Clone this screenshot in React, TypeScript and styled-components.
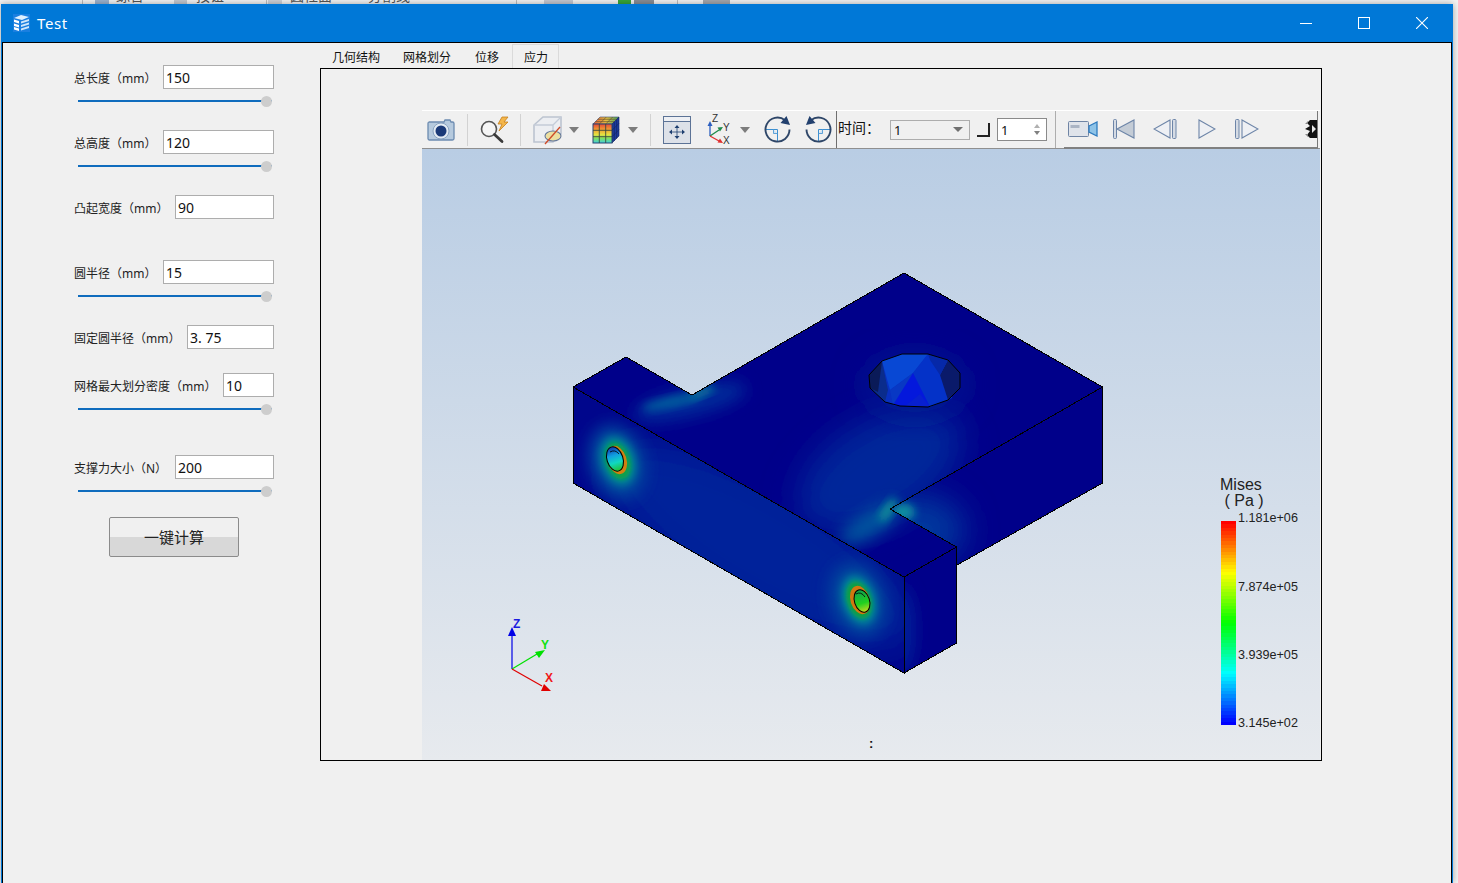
import React from 'react';
import styled, { createGlobalStyle } from 'styled-components';

const Global = createGlobalStyle`
  html, body { margin: 0; padding: 0; height: 100%; overflow: hidden; background: #f4f4f4; }
  #root { height: 100%; }
  * { box-sizing: border-box; }
`;

const CJK = `"Noto Sans", "Noto Sans CJK SC", sans-serif`;

const Page = styled.div`
  height: 883px;
  width: 1458px;
  display: flex;
  flex-direction: column;
  overflow: hidden;
  font-family: ${CJK};
`;
const BackStrip = styled.div`
  height: 4px;
  overflow: hidden;
  display: flex;
  background: #f3f3f3;
  color: #555;
  font-size: 14px;
  line-height: 20px;
`;
const BackLabel = styled.span<{ $ml: number }>`
  flex: none;
  margin: -14px 0 0 ${p => p.$ml}px;
  height: 20px;
`;
const BackLine = styled.span<{ $ml: number }>`
  flex: none;
  width: 1px;
  margin-left: ${p => p.$ml}px;
  background: #bdbdbd;
`;
const BackShape = styled.span<{ $ml: number; $w: number; $c: string }>`
  flex: none;
  width: ${p => p.$w}px;
  margin-left: ${p => p.$ml}px;
  background: ${p => p.$c};
`;
const Win = styled.div`
  flex: 1;
  width: 1452px;
  margin-left: 1px;
  padding: 0 1px;
  display: flex;
  flex-direction: column;
  background: #0078d7;
  box-shadow: 0 0 7px rgba(0, 0, 0, 0.35);
`;
const TitleBar = styled.div`
  height: 38px;
  display: flex;
  align-items: center;
  padding-left: 11px;
  color: #fff;
`;
const TitleText = styled.span`
  margin-left: 7px;
  font-size: 15px;
  letter-spacing: 0.6px;
`;
const WinButtons = styled.div`
  margin-left: auto;
  display: flex;
  align-items: center;
  padding-right: 24px;
  gap: 46px;
`;
const Client = styled.div`
  flex: 1;
  display: flex;
  background: #f0f0f0;
  border: 1px solid #000;
  border-bottom: none;
`;
const Panel = styled.div`
  width: 317px;
  padding: 22px 46px 0 71px;
  display: flex;
  flex-direction: column;
`;
const Group = styled.div<{ $h: number }>`
  height: ${p => p.$h}px;
`;
const Row = styled.div`
  display: flex;
  justify-content: space-between;
  align-items: center;
  height: 24px;
`;
const Label = styled.label`
  font-size: 12px;
  color: #222;
  white-space: nowrap;
  padding-top: 2px;
`;
const Field = styled.input<{ $w: number }>`
  width: ${p => p.$w}px;
  height: 24px;
  border: 1px solid #adadad;
  background: #fff;
  padding: 0 2px;
  font-family: ${CJK};
  font-size: 14px;
  color: #111;
  outline: none;
`;
const Slider = styled.div`
  position: relative;
  margin: 7px 0 0 4px;
  width: 194px;
  height: 10px;
  display: flex;
  align-items: center;
`;
const Track = styled.div`
  width: 100%;
  height: 2px;
  background: #0f6cbd;
`;
const Thumb = styled.div`
  position: absolute;
  right: 0;
  top: 0;
  width: 11px;
  height: 11px;
  border-radius: 50%;
  background: #cdcdcd;
`;
const CalcButton = styled.button`
  width: 130px;
  height: 40px;
  margin-left: 35px;
  border: 1px solid #8b8b8b;
  border-radius: 2px;
  background: linear-gradient(#f0f0f0 0, #f0f0f0 50%, #d8d8d8 50%, #d8d8d8 100%);
  font-family: ${CJK};
  font-size: 15px;
  color: #222;
  padding: 0 0 2px;
`;
const Main = styled.div`
  display: flex;
  flex-direction: column;
  padding-top: 1px;
`;
const Tabs = styled.div`
  display: flex;
  height: 24px;
`;
const Tab = styled.div<{ $active?: boolean; $pl: number; $pr: number }>`
  font-size: 12px;
  line-height: ${p => (p.$active ? 25 : 27)}px;
  height: 24px;
  color: #111;
  padding: 0 ${p => p.$pr}px 0 ${p => p.$pl}px;
  ${p => p.$active && `border: 1px solid #dadada; border-bottom: none;`}
`;
const Frame = styled.div`
  width: 1002px;
  height: 693px;
  border: 1px solid #000;
  padding: 41px 1px 0 101px;
  display: flex;
  flex-direction: column;
`;
const ToolBar = styled.div`
  height: 39px;
  flex: none;
  display: flex;
  align-items: center;
  background: #f0f0f0;
  border-top: 1px solid #fff;
  border-bottom: 1px solid #8f8f8f;
  padding-left: 5px;
`;
const Tool = styled.span<{ $w: number; $ml?: number }>`
  flex: none;
  display: flex;
  align-items: center;
  justify-content: center;
  width: ${p => p.$w}px;
  margin-left: ${p => p.$ml ?? 0}px;
`;
const Sep = styled.span<{ $ml: number }>`
  flex: none;
  width: 1px;
  height: 32px;
  margin-left: ${p => p.$ml}px;
  background: #d2d2d2;
`;
const HardSep = styled.span`
  flex: none;
  align-self: stretch;
  width: 1px;
  margin-left: 4px;
  background: #6f6f6f;
`;
const TimeLabel = styled.span`
  margin-left: 1px;
  width: 52px;
  font-size: 14px;
  line-height: 18px;
  padding-bottom: 3px;
  color: #111;
  flex: none;
`;
const Combo = styled.div`
  flex: none;
  width: 80px;
  height: 20px;
  border: 1px solid #adadad;
  display: flex;
  align-items: center;
  justify-content: space-between;
  padding: 0 6px 0 3px;
  font-size: 13px;
  color: #111;
`;
const ComboArrow = styled.span`
  width: 0;
  height: 0;
  border-left: 5px solid transparent;
  border-right: 5px solid transparent;
  border-top: 5px solid #707070;
`;
const CornerBox = styled.span`
  flex: none;
  width: 13px;
  height: 14px;
  margin-left: 7px;
  border-right: 2px solid #222;
  border-bottom: 2px solid #222;
`;
const Spin = styled.div`
  flex: none;
  width: 50px;
  height: 23px;
  margin-left: 7px;
  border: 1px solid #8a8a8a;
  background: #fff;
  display: flex;
  align-items: center;
  justify-content: space-between;
  padding: 0 6px 0 3px;
  font-size: 13px;
  color: #111;
`;
const SpinArrows = styled.span`
  display: flex;
  flex-direction: column;
  gap: 3px;
`;
const SpinUp = styled.span`
  width: 0;
  height: 0;
  border-left: 3px solid transparent;
  border-right: 3px solid transparent;
  border-bottom: 4px solid #b0b0b0;
`;
const SpinDown = styled(SpinUp)`
  border-bottom: none;
  border-top: 4px solid #808080;
`;
const LightSep = styled.span`
  flex: none;
  align-self: stretch;
  width: 1px;
  margin-left: 8px;
  background: #adadad;
`;
const Player = styled.div`
  flex: none;
  align-self: stretch;
  width: 254px;
  margin-left: 8px;
  margin-bottom: -1px;
  display: flex;
  align-items: center;
  padding-left: 4px;
  border-bottom: 2px solid #808080;
  border-right: 1px solid #777;
`;
const Canvas = styled.div`
  position: relative;
  flex: 1;
  background: linear-gradient(#b9cde4 0%, #e7eaee 100%);
  overflow: hidden;
`;
const Scene = styled.svg`
  position: absolute;
  inset: 0;
  width: 100%;
  height: 100%;
`;
const Legend = styled.div`
  position: absolute;
  left: 798px;
  top: 328px;
  width: 90px;
  height: 255px;
  font-family: "Liberation Sans", sans-serif;
  color: #222;
`;
const LegendTitle = styled.div`
  font-size: 16px;
  line-height: 16px;
  white-space: pre;
`;
const steps = 60;
const ramp = (t: number) => {
  const c = (v: number) => Math.round(Math.max(0, Math.min(1, v)) * 255);
  const s = t * 4;
  const r = c(s < 1 ? 1 : 2 - s);
  const g = c(s < 1 ? s : s < 3 ? 1 : 4 - s);
  const b = c(s < 2 ? 0 : s < 3 ? s - 2 : 1);
  return `rgb(${r},${g},${b})`;
};
const bandStops = Array.from({ length: steps }, (_, i) => {
  const a = (i / steps) * 100;
  const z = ((i + 1) / steps) * 100;
  return `${ramp(i / (steps - 1))} ${a}% ${z}%`;
}).join(',');
const ColorBar = styled.div`
  position: absolute;
  left: 1px;
  top: 44px;
  width: 15px;
  height: 204px;
  background: linear-gradient(${bandStops});
`;
const Tick = styled.div<{ $top: number }>`
  position: absolute;
  left: 18px;
  top: ${p => p.$top}px;
  font-size: 12.6px;
  line-height: 14px;
  white-space: nowrap;
`;
const Colon = styled.div`
  position: absolute;
  left: 447px;
  top: 587px;
  font-family: "Liberation Sans", sans-serif;
  font-weight: bold;
  font-size: 13px;
  color: #111;
`;

const Arrow = () => (
  <svg width="10" height="6" viewBox="0 0 10 6"><path d="M0 0h10L5 6z" fill="#7c7c7c" /></svg>
);

const AppIcon = () => (
  <svg width="17" height="18" viewBox="0 0 17 18">
    <rect width="17" height="18" fill="#1a7fe0" />
    <path d="M1 4l7-3 8 2-7 3z" fill="#dff0ff" />
    <path d="M1 5.500l5 1.600v2.400L1 8zM1 9.500l5 1.600v2.400L1 12zM1 13l5 1.600V17l-5-1.600z" fill="#fff" />
    <path d="M8 7.500l8-2.500v2l-8 2.500zM8 11l8-2.500v2L8 13zM8 14.500L16 12v2l-8 2.500z" fill="#cfe6fb" />
  </svg>
);
const MinIcon = () => <svg width="12" height="12" viewBox="0 0 12 12"><path d="M0 6.500h12" stroke="#fff" strokeWidth="1" /></svg>;
const MaxIcon = () => <svg width="12" height="12" viewBox="0 0 12 12"><rect x=".5" y=".5" width="11" height="11" fill="none" stroke="#fff" /></svg>;
const CloseIcon = () => <svg width="12" height="12" viewBox="0 0 12 12"><path d="M0 0l12 12M12 0L0 12" stroke="#fff" strokeWidth="1.100" /></svg>;

const CameraIcon = () => (
  <svg width="28" height="25" viewBox="0 0 28 25">
    <path d="M2 5h15l1-2h5l1 2h1.500A1.500 1.500 0 0 1 27 6.500v15a1.500 1.500 0 0 1-1.500 1.500h-23A1.500 1.500 0 0 1 1 21.500v-15A1.500 1.500 0 0 1 2 5z" fill="#b6cade" stroke="#6c8bb0" strokeWidth="1.300" />
    <circle cx="14" cy="14" r="8" fill="#e3ebf3" stroke="#8aa3c0" />
    <circle cx="14" cy="14" r="5.500" fill="#1b3a78" />
  </svg>
);
const SearchIcon = () => (
  <svg width="30" height="28" viewBox="0 0 30 28">
    <circle cx="9" cy="13" r="7.500" fill="#f5f5f5" stroke="#555" strokeWidth="1.600" />
    <path d="M14.500 18.500L22 25.500" stroke="#3a3a3a" strokeWidth="2.800" strokeLinecap="round" />
    <path d="M22 1l6 0-4 5 4 0-9 9 3-7-4 0z" fill="#f4b64a" stroke="#c5801e" strokeWidth=".8" />
  </svg>
);
const HideCubeIcon = () => (
  <svg width="30" height="30" viewBox="0 0 30 30">
    <path d="M1 10L10 2h18v17l-8 8H1z" fill="#eceef2" stroke="#bcc4d0" strokeWidth="1.600" />
    <path d="M1 10h19v17M20 10l8-8" fill="none" stroke="#c4ccd8" strokeWidth="1.300" />
    <ellipse cx="20" cy="21" rx="8" ry="5" fill="#ecdfa0" stroke="#64789a" strokeWidth="1.100" />
    <path d="M27 12L12 29" stroke="#cf4b28" strokeWidth="1.300" />
  </svg>
);
const ColorCubeIcon = () => (
  <svg width="28" height="28" viewBox="0 0 28 28">
    <defs>
      <linearGradient id="rainFront" x1="0" y1="0" x2="0" y2="1">
        <stop offset="0" stopColor="#e8463a" />
        <stop offset=".3" stopColor="#f0a030" />
        <stop offset=".55" stopColor="#e6e040" />
        <stop offset=".75" stopColor="#80e060" />
        <stop offset="1" stopColor="#40d0e0" />
      </linearGradient>
      <linearGradient id="rainTop" x1="0" y1="0" x2="1" y2="0">
        <stop offset="0" stopColor="#e8583a" />
        <stop offset=".5" stopColor="#e8c040" />
        <stop offset="1" stopColor="#40a060" />
      </linearGradient>
    </defs>
    <path d="M1 8l7-7h19l-7 7z" fill="url(#rainTop)" stroke="#3a4a70" strokeWidth=".6" />
    <path d="M20 8l7-7v19l-7 7z" fill="#1c3a9c" stroke="#12245c" strokeWidth=".6" />
    <rect x="1" y="8" width="19" height="19" fill="url(#rainFront)" stroke="#2a4470" strokeWidth="1" />
    <path d="M7.300 8v19M13.700 8v19M1 14.300h19M1 20.700h19" stroke="#3a4a40" strokeWidth=".9" />
    <path d="M3.400 5.600h19M5.700 3.300h19M7.300 8l7-7M13.700 8l7-7" stroke="#5a4a30" strokeWidth=".6" />
    <path d="M22.300 6v19M24.600 3.600v19M20 14.300l7-7M20 20.700l7-7" stroke="#12245c" strokeWidth=".6" />
  </svg>
);
const FitIcon = () => (
  <svg width="28" height="28" viewBox="0 0 28 28">
    <rect x=".5" y=".5" width="27" height="27" fill="#dde1e8" stroke="#5c7396" />
    <rect x="1" y="1" width="26" height="4" fill="#eef0f4" />
    <path d="M1 5.500h26" stroke="#5c7396" />
    <path d="M14 9l2.500 3h-5zM14 23l2.500-3h-5zM6 16l3-2.500v5zM22 16l-3-2.500v5z" fill="#1f3f70" />
    <path d="M14 11v10M8 16h12" stroke="#1f3f70" strokeWidth=".8" />
  </svg>
);
const AxesIcon = () => (
  <svg width="24" height="32" viewBox="0 0 24 32">
    <path d="M3 22V10" stroke="#2c5fc0" strokeWidth="1.300" />
    <path d="M3 7l2.500 5h-5z" fill="#2c5fc0" />
    <path d="M3 22l9-6" stroke="#1f8a4a" strokeWidth="1.300" />
    <path d="M16 13l-5.500.5 2.500 4z" fill="#1f8a4a" />
    <path d="M3 22l9 5" stroke="#e03030" strokeWidth="1.300" />
    <path d="M16 29l-5.500-.5 2.500-4z" fill="#e03030" />
    <text x="5" y="8" fontFamily="Liberation Sans, sans-serif" fontSize="10" fill="#333">Z</text>
    <text x="16" y="17" fontFamily="Liberation Sans, sans-serif" fontSize="10" fill="#333">Y</text>
    <text x="16" y="30" fontFamily="Liberation Sans, sans-serif" fontSize="10" fill="#333">X</text>
  </svg>
);
const RotateIcon = ({ flip }: { flip?: boolean }) => (
  <svg width="27" height="27" viewBox="0 0 27 27" style={flip ? { transform: 'scaleX(-1)' } : undefined}>
    <path d="M1 13.500h12.500V26" fill="none" stroke="#3d8fd0" />
    <path d="M9.500 13.500v4h4" fill="#cfe3f4" stroke="#3d8fd0" strokeWidth=".8" />
    <path d="M21 4.200A12 12 0 1 0 25.500 13.500" fill="none" stroke="#2e4668" strokeWidth="1.900" />
    <path d="M26 9l-9.500-2 6-7z" fill="#22406e" />
  </svg>
);
const VideoIcon = () => (
  <svg width="30" height="16" viewBox="0 0 30 16">
    <rect x=".5" y=".5" width="20" height="15" rx="1" fill="#dfe3ea" stroke="#6f84a4" />
    <rect x="2.500" y="4" width="9" height="3" fill="#aab4c4" />
    <path d="M21 5l8-4v14l-8-4z" fill="#8fc4e8" stroke="#2f7cbf" strokeWidth="1.300" />
  </svg>
);
const strokeBlue = '#6d85a8';
const FirstIcon = () => (
  <svg width="22" height="20" viewBox="0 0 22 20">
    <rect x=".5" y=".5" width="3" height="19" rx="1" fill="#d5dbe4" stroke={strokeBlue} />
    <path d="M21 1v18L4 10z" fill="#c4ccd6" stroke={strokeBlue} strokeWidth="1.100" />
  </svg>
);
const PrevIcon = () => (
  <svg width="24" height="20" viewBox="0 0 24 20">
    <path d="M17 1v18L1 10z" fill="#eef0f4" stroke={strokeBlue} strokeWidth="1.100" />
    <rect x="19.500" y=".5" width="3.500" height="19" rx="1" fill="#d5dbe4" stroke={strokeBlue} />
  </svg>
);
const PlayIcon = () => (
  <svg width="18" height="20" viewBox="0 0 18 20">
    <path d="M1 1v18l16-9z" fill="#eef0f4" stroke={strokeBlue} strokeWidth="1.100" />
  </svg>
);
const NextIcon = () => (
  <svg width="24" height="20" viewBox="0 0 24 20">
    <rect x=".5" y=".5" width="3.500" height="19" rx="1" fill="#d5dbe4" stroke={strokeBlue} />
    <path d="M7 1v18l16-9z" fill="#eef0f4" stroke={strokeBlue} strokeWidth="1.100" />
  </svg>
);
const HandleIcon = () => (
  <svg width="12" height="18" viewBox="0 0 12 18">
    <path d="M12 0v18H5l-3-3 3-4-5-2 5-3-3-3 3-3z" fill="#111" />
    <path d="M7 5l4 4-4 4z" fill="#e8e8e8" />
    <path d="M0 4l3-3v3zM0 14l3 3v-3z" fill="#888" />
  </svg>
);

const P = {
  top: '904,273', right: '1102.500,387', rightB: '1102.500,483', join: '957,565',
  notch: '890,509', blockR: '956.500,547', front: '904,577', frontB: '904,673',
  blockB: '956.500,643', left: '573,387', leftB: '573,483', back: '626,357', inner: '692,395',
};
const topFace = [P.top, P.right, P.notch, P.blockR, P.front, P.left, P.back, P.inner].join(' ');
const rightFace = [P.right, P.rightB, P.join, P.blockR, P.notch].join(' ');
const longFace = [P.left, P.front, P.frontB, P.leftB].join(' ');
const endFace = [P.front, P.blockR, P.blockB, P.frontB].join(' ');

const holeRing = '902,354 928,354 948,360 960,373 960,388 948,400 928,407 900,406 885,402 870,388 869,375 882,361';
const facets: [string, string][] = [
  ['902,354 928,354 913,373 890,390 882,361', '#0848d4'],
  ['928,354 948,360 952,398 930,407 913,373', '#0432c8'],
  ['948,360 960,373 960,388 948,400 940,375', '#0a1a6a'],
  ['928,354 948,360 940,375 930,360', '#0628a8'],
  ['882,361 888,390 885,402 870,388 869,375', '#0a2c8c'],
  ['882,361 869,375 870,388 878,392', '#0a1a58'],
  ['913,373 890,390 893,405 900,406', '#0838c4'],
  ['913,373 930,407 900,406 893,405', '#0418dc'],
  ['920,394 930,407 905,406', '#0820d0'],
];

const Model = () => (
  <Scene viewBox="422 149 898 611">
    <defs>
      <filter id="b2" x="-50%" y="-50%" width="200%" height="200%"><feGaussianBlur stdDeviation="2" /></filter>
      <filter id="b4" x="-50%" y="-50%" width="200%" height="200%"><feGaussianBlur stdDeviation="4" /></filter>
      <filter id="b8" x="-50%" y="-50%" width="200%" height="200%"><feGaussianBlur stdDeviation="8" /></filter>
      <filter id="b16" x="-50%" y="-50%" width="200%" height="200%"><feGaussianBlur stdDeviation="16" /></filter>
      <clipPath id="cTop"><polygon points={topFace} /></clipPath>
      <clipPath id="cRight"><polygon points={rightFace} /></clipPath>
      <clipPath id="cLong"><polygon points={longFace} /></clipPath>
      <clipPath id="cEnd"><polygon points={endFace} /></clipPath>
      <linearGradient id="holeL" x1="0" y1="0" x2="0" y2="1">
        <stop offset="0" stopColor="#1038b0" />
        <stop offset=".35" stopColor="#10a0e0" />
        <stop offset=".65" stopColor="#10d8c0" />
        <stop offset="1" stopColor="#20c030" />
      </linearGradient>
      <linearGradient id="holeR" x1="0" y1="0" x2="0" y2="1">
        <stop offset="0" stopColor="#10a050" />
        <stop offset=".6" stopColor="#20d020" />
        <stop offset="1" stopColor="#c8d820" />
      </linearGradient>
    </defs>

    <polygon points={rightFace} fill="#00008a" />
    <polygon points={topFace} fill="#00008a" />
    <polygon points={longFace} fill="#00068c" />
    <polygon points={endFace} fill="#00008a" />

    <g clipPath="url(#cTop)">
      <ellipse cx="880" cy="470" rx="90" ry="50" fill="#00269a" filter="url(#b16)" transform="rotate(-30 880 470)" />
      <ellipse cx="915" cy="385" rx="50" ry="28" fill="#001a92" filter="url(#b16)" />
      <ellipse cx="690" cy="402" rx="58" ry="14" fill="#002c9a" filter="url(#b8)" transform="rotate(-14 690 402)" />
      <ellipse cx="672" cy="402" rx="30" ry="5" fill="#05609e" filter="url(#b4)" transform="rotate(-12 672 402)" />
      <ellipse cx="702" cy="392" rx="14" ry="4" fill="#0a7e9c" filter="url(#b4)" transform="rotate(-20 702 392)" />
      <ellipse cx="870" cy="524" rx="34" ry="12" fill="#00549e" filter="url(#b8)" transform="rotate(-32 870 524)" />
      <ellipse cx="888" cy="510" rx="14" ry="5" fill="#109099" filter="url(#b4)" transform="rotate(-55 888 510)" />
    </g>
    <g clipPath="url(#cRight)">
      <ellipse cx="915" cy="530" rx="50" ry="36" fill="#00389e" filter="url(#b16)" />
      <ellipse cx="903" cy="512" rx="12" ry="9" fill="#0c8ea0" filter="url(#b4)" />
    </g>
    <g clipPath="url(#cLong)">
      <ellipse cx="760" cy="545" rx="175" ry="62" fill="#00209a" filter="url(#b16)" transform="rotate(30 760 545)" />
      <ellipse cx="617" cy="462" rx="27" ry="38" fill="#00469e" filter="url(#b8)" transform="rotate(-18 617 462)" />
      <ellipse cx="618" cy="461" rx="17" ry="25" fill="#008a96" filter="url(#b4)" transform="rotate(-18 618 461)" />
      <ellipse cx="618" cy="461" rx="12" ry="19" fill="#08a048" filter="url(#b2)" transform="rotate(-18 618 461)" />
      <ellipse cx="617" cy="460" rx="9.500" ry="14.500" fill="#d08010" transform="rotate(-18 617 460)" />
      <ellipse cx="858" cy="600" rx="27" ry="38" fill="#00469e" filter="url(#b8)" transform="rotate(-18 858 600)" />
      <ellipse cx="859" cy="600" rx="16" ry="25" fill="#008e9a" filter="url(#b4)" transform="rotate(-18 859 600)" />
      <ellipse cx="859" cy="600" rx="12" ry="19" fill="#10a040" filter="url(#b2)" transform="rotate(-18 859 600)" />
      <ellipse cx="860" cy="600" rx="9.500" ry="14.500" fill="#d07810" transform="rotate(-18 860 600)" />
    </g>
    <g clipPath="url(#cEnd)">
      <ellipse cx="900" cy="630" rx="14" ry="44" fill="#00229a" filter="url(#b8)" />
    </g>

    <ellipse cx="615" cy="459" rx="8" ry="12.500" fill="url(#holeL)" stroke="#000" strokeWidth="1" transform="rotate(-18 615 459)" />
    <path d="M610 452q5-3 9 2" fill="none" stroke="#000" strokeWidth=".8" />
    <ellipse cx="862" cy="601" rx="7.500" ry="11.500" fill="url(#holeR)" stroke="#000" strokeWidth="1" transform="rotate(-18 862 601)" />
    <path d="M856 594q5-3 9 3" fill="none" stroke="#000" strokeWidth=".8" />

    <polygon points={holeRing} fill="#0830c0" />
    {facets.map(([pts, fill], i) => <polygon key={i} points={pts} fill={fill} />)}
    <polygon points={holeRing} fill="none" stroke="#000" strokeWidth="1" />

    <g fill="none" stroke="#000" strokeWidth="1" shapeRendering="crispEdges">
      <polygon points={topFace} />
      <polyline points={[P.left, P.leftB, P.frontB, P.front].join(' ')} />
      <polyline points={[P.frontB, P.blockB, P.blockR].join(' ')} />
      <polyline points={[P.right, P.rightB, P.join].join(' ')} />
    </g>

    <path d="M512 669V632" stroke="#0000e6" strokeWidth="1.200" />
    <path d="M512 627l4 9h-8z" fill="#0000e6" />
    <path d="M512 669l25-15" stroke="#00e000" strokeWidth="1.200" />
    <path d="M545 650l-6 8-4-6z" fill="#00e000" />
    <path d="M512 669l30 17" stroke="#e00000" strokeWidth="1.200" />
    <path d="M551 691l-10 0 3-7z" fill="#e00000" />
    <text x="513" y="628" fontFamily="Liberation Sans, sans-serif" fontWeight="bold" fontSize="12" fill="#1a1ae0">Z</text>
    <text x="541" y="649" fontFamily="Liberation Sans, sans-serif" fontWeight="bold" fontSize="12" fill="#10e010">Y</text>
    <text x="545" y="682" fontFamily="Liberation Sans, sans-serif" fontWeight="bold" fontSize="12" fill="#f01818">X</text>
  </Scene>
);

const fields = [
  { label: '总长度（mm）', value: '150', w: 111, h: 65, slider: true },
  { label: '总高度（mm）', value: '120', w: 111, h: 65, slider: true },
  { label: '凸起宽度（mm）', value: '90', w: 99, h: 65, slider: false },
  { label: '圆半径（mm）', value: '15', w: 111, h: 65, slider: true },
  { label: '固定圆半径（mm）', value: '3. 75', w: 87, h: 48, slider: false },
  { label: '网格最大划分密度（mm）', value: '10', w: 51, h: 82, slider: true },
  { label: '支撑力大小（N）', value: '200', w: 99, h: 62, slider: true },
];

export default function App() {
  return (
    <Page>
      <Global />
      <BackStrip>
        <BackLine $ml={82} />
        <BackShape $ml={12} $w={14} $c="#9db4d0" />
        <BackLabel $ml={7}>综合</BackLabel>
        <BackShape $ml={30} $w={13} $c="#c4c9d0" />
        <BackLabel $ml={9}>按钮</BackLabel>
        <BackLine $ml={42} />
        <BackShape $ml={1} $w={14} $c="#cfd2d8" />
        <BackLabel $ml={8}>圆柱面</BackLabel>
        <BackLabel $ml={36}>分割线</BackLabel>
        <BackLine $ml={106} />
        <BackShape $ml={27} $w={29} $c="#c6c9d2" />
        <BackShape $ml={45} $w={13} $c="#38a838" />
        <BackShape $ml={3} $w={20} $c="#8a8f96" />
        <BackLine $ml={23} />
        <BackShape $ml={25} $w={27} $c="#a4a8ae" />
      </BackStrip>
      <Win>
        <TitleBar>
          <AppIcon />
          <TitleText>Test</TitleText>
          <WinButtons>
            <MinIcon />
            <MaxIcon />
            <CloseIcon />
          </WinButtons>
        </TitleBar>
        <Client>
          <Panel>
            {fields.map(f => (
              <Group key={f.label} $h={f.h}>
                <Row>
                  <Label>{f.label}</Label>
                  <Field $w={f.w} defaultValue={f.value} readOnly />
                </Row>
                {f.slider && (
                  <Slider>
                    <Track />
                    <Thumb />
                  </Slider>
                )}
              </Group>
            ))}
            <CalcButton>一键计算</CalcButton>
          </Panel>
          <Main>
            <Tabs>
              <Tab $pl={12} $pr={11}>几何结构</Tab>
              <Tab $pl={12} $pr={12}>网格划分</Tab>
              <Tab $pl={12} $pr={13}>位移</Tab>
              <Tab $active $pl={11} $pr={10}>应力</Tab>
            </Tabs>
            <Frame>
              <ToolBar>
                <Tool $w={28}><CameraIcon /></Tool>
                <Sep $ml={12} />
                <Tool $w={30} $ml={12}><SearchIcon /></Tool>
                <Sep $ml={10} />
                <Tool $w={30} $ml={12}><HideCubeIcon /></Tool>
                <Tool $w={10} $ml={6}><Arrow /></Tool>
                <Tool $w={28} $ml={13}><ColorCubeIcon /></Tool>
                <Tool $w={10} $ml={8}><Arrow /></Tool>
                <Sep $ml={12} />
                <Tool $w={28} $ml={12}><FitIcon /></Tool>
                <Tool $w={24} $ml={16}><AxesIcon /></Tool>
                <Tool $w={10} $ml={9}><Arrow /></Tool>
                <Tool $w={27} $ml={14}><RotateIcon /></Tool>
                <Tool $w={27} $ml={14}><RotateIcon flip /></Tool>
                <HardSep />
                <TimeLabel>时间：</TimeLabel>
                <Combo>1<ComboArrow /></Combo>
                <CornerBox />
                <Spin>1<SpinArrows><SpinUp /><SpinDown /></SpinArrows></Spin>
                <LightSep />
                <Player>
                  <Tool $w={30}><VideoIcon /></Tool>
                  <Tool $w={22} $ml={15}><FirstIcon /></Tool>
                  <Tool $w={24} $ml={18}><PrevIcon /></Tool>
                  <Tool $w={18} $ml={21}><PlayIcon /></Tool>
                  <Tool $w={24} $ml={19}><NextIcon /></Tool>
                  <Tool $w={12} $ml={46}><HandleIcon /></Tool>
                </Player>
              </ToolBar>
              <Canvas>
                <Model />
                <Legend>
                  <LegendTitle>Mises</LegendTitle>
                  <LegendTitle> ( Pa )</LegendTitle>
                  <ColorBar />
                  <Tick $top={34}>1.181e+06</Tick>
                  <Tick $top={103}>7.874e+05</Tick>
                  <Tick $top={171}>3.939e+05</Tick>
                  <Tick $top={239}>3.145e+02</Tick>
                </Legend>
                <Colon>:</Colon>
              </Canvas>
            </Frame>
          </Main>
        </Client>
      </Win>
    </Page>
  );
}
